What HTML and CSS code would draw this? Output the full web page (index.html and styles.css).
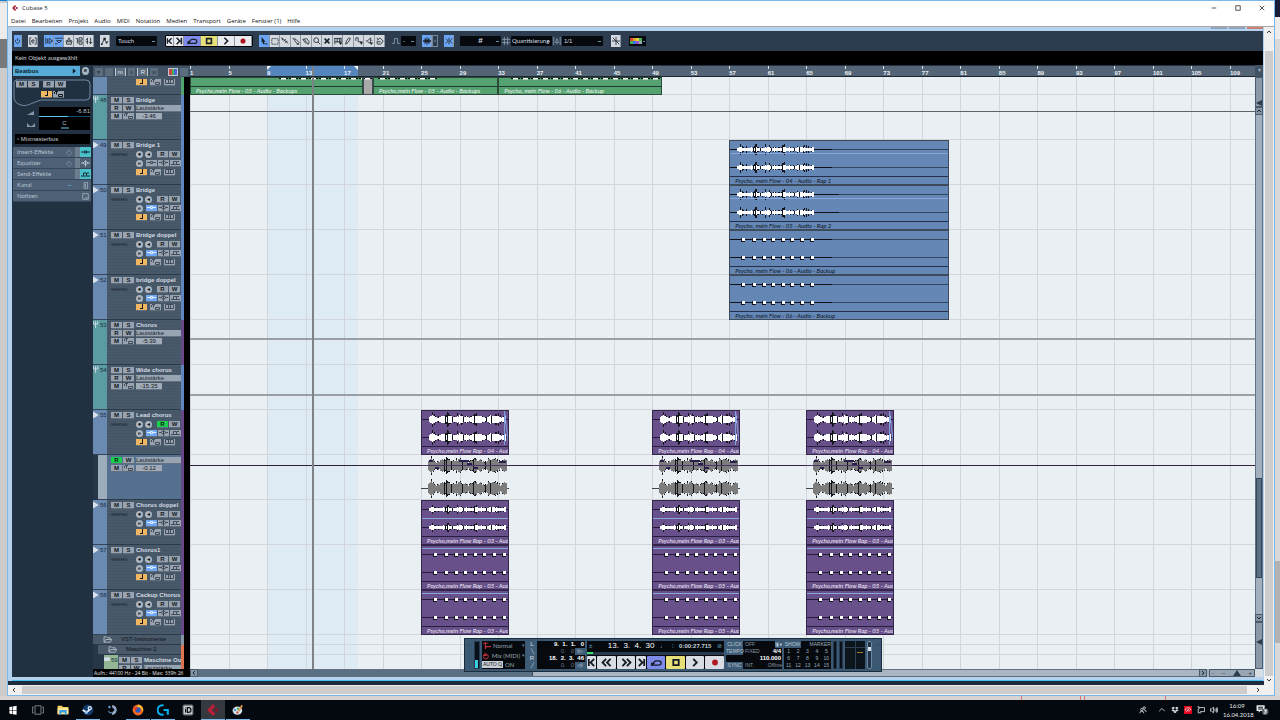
FILE: index.html
```html
<!DOCTYPE html>
<html lang="de">
<head>
  <meta charset="UTF-8" />
  <meta name="viewport" content="width=device-width, initial-scale=1.0"/>
  <title>Cubase 5</title>
  <link rel="stylesheet" href="styles.css">
</head>
<body>

<svg class="sprite" aria-hidden="true">
  <symbol id="i-power" viewBox="0 0 10 10"><path d="M3 3a3 3 0 1 0 4 0M5 1v4"/></symbol>
  <symbol id="i-brackets" viewBox="0 0 10 10"><path d="M3 1H1v8h2M7 1h2v8H7M3 5h4M6.500 4a2 2 0 1 0 0 3"/></symbol>
  <symbol id="i-inspect" viewBox="0 0 10 10"><path d="M1 1v8M3 2v6M5 2v6c4 0 4-6 0-6M9 4v2"/></symbol>
  <symbol id="i-info" viewBox="0 0 10 10"><path d="M0 1.500h10M2 4.500h6l-3 3zM0 8.500h3"/></symbol>
  <symbol id="i-overview" viewBox="0 0 10 10"><path d="M5 1L3 5h4zM2 6h6v3H2zM2 4l-1 2M8 4l1 2"/></symbol>
  <symbol id="i-pool" viewBox="0 0 10 10"><path d="M1 2h2v6M3 5h2M5 1h4v3H5zM5 6h4v3H5z"/></symbol>
  <symbol id="i-mixer" viewBox="0 0 10 10"><path d="M3 1v8M7 1v8M1 4l2-2M5 7h4M1 6h3"/></symbol>
  <symbol id="i-auto" viewBox="0 0 10 10"><path d="M1 9l3-6 3 4 2-2"/><path class="solid" d="M3 1h3v3H3zM6 6h2v2H6zM0 8h2v2H0z"/></symbol>
  <symbol id="i-tostart" viewBox="0 0 10 10"><path class="bold" d="M2 1v8M8 1L4 5l4 4"/></symbol>
  <symbol id="i-toend" viewBox="0 0 10 10"><path class="bold" d="M8 1v8M2 1l4 4-4 4"/></symbol>
  <symbol id="i-rew" viewBox="0 0 12 10"><path class="bold" d="M5 1L1 5l4 4M10 1L6 5l4 4"/></symbol>
  <symbol id="i-fwd" viewBox="0 0 12 10"><path class="bold" d="M2 1l4 4-4 4M7 1l4 4-4 4"/></symbol>
  <symbol id="i-loop" viewBox="0 0 14 10"><path d="M1 8h9c4 0 4-5 0-5H7C5 3 4 5 3 7" stroke-width="1.500"/><path class="solid" d="M1 5l5 1-4 3z"/></symbol>
  <symbol id="i-stop" viewBox="0 0 10 10"><path class="bold" d="M2 2h6v6H2z"/></symbol>
  <symbol id="i-play" viewBox="0 0 10 10"><path class="bold" d="M3 1l4 4-4 4"/></symbol>
  <symbol id="i-rec" viewBox="0 0 10 10"><circle cx="5" cy="5" r="3.200" fill="#b01620" stroke="none"/></symbol>
  <symbol id="i-arrow" viewBox="0 0 10 10"><path class="solid" d="M2 0l5 6H5l1 3-2 0-1-3-1 1z"/><path class="solid" d="M6 8h4L8 10z"/></symbol>
  <symbol id="i-range" viewBox="0 0 10 10"><path d="M1 2h8v7H1z" stroke-dasharray="2 1"/></symbol>
  <symbol id="i-split" viewBox="0 0 10 10"><path d="M1 1l8 7M3 5l3-2M5 7l3-2M1 1l1 3"/></symbol>
  <symbol id="i-glue" viewBox="0 0 10 10"><path d="M1 1l2 3 4 5 2-2-4-4-3-1M6 9h3"/></symbol>
  <symbol id="i-erase" viewBox="0 0 10 10"><path d="M1 3l5-1 3 4-1 3-4-2zM3 3l3 4"/></symbol>
  <symbol id="i-zoom" viewBox="0 0 10 10"><circle cx="4" cy="4" r="3"/><path d="M6 6l3 3"/></symbol>
  <symbol id="i-mute" viewBox="0 0 10 10"><path class="bold" d="M2 2l6 6M8 2L2 8"/></symbol>
  <symbol id="i-warp" viewBox="0 0 10 10"><path d="M1 1v8M4 1v6M7 1v6M1 2h8M1 6h8M9 1v8"/><path class="solid" d="M6 7h4L8 10z"/></symbol>
  <symbol id="i-pen" viewBox="0 0 10 10"><path d="M2 9l1-4 3-4 2 1-3 5z"/></symbol>
  <symbol id="i-line" viewBox="0 0 10 10"><path d="M1 1h3v5h4M1 1v4"/><path class="solid" d="M6 6h4L8 10z"/></symbol>
  <symbol id="i-play2" viewBox="0 0 10 10"><path d="M1 5h2l4-4v7L3 6M8 4h1"/><path class="solid" d="M6 7h4L8 10z"/></symbol>
  <symbol id="i-color" viewBox="0 0 10 10"><path d="M2 4l3-3 4 4-3 4H2L1 6h5M1 1l2 3"/></symbol>
  <symbol id="i-curve" viewBox="0 0 10 10"><path d="M0 8h3V2h4v6h3"/></symbol>
  <symbol id="i-scroll" viewBox="0 0 10 10"><path d="M5 0v10"/><path class="solid" d="M0 4h2V1l3 3v2L2 9V6H0zM10 4H8V1L5 4v2l3 3V6h2z"/></symbol>
  <symbol id="i-snap" viewBox="0 0 10 10"><path d="M5 1v8M1 2l3 3-3 3M9 2L6 5l3 3"/></symbol>
  <symbol id="i-hash" viewBox="0 0 10 10"><path d="M3 0v10M7 0v10M0 3h10M0 7h10"/></symbol>
  <symbol id="i-iq" viewBox="0 0 10 10"><path d="M1 0v10M9 0v10M3 7l2-5 2 5zM5 7v2"/></symbol>
  <symbol id="i-cross" viewBox="0 0 10 10"><path d="M5 0v10M0 5h10M1 1l8 8"/></symbol>
  <symbol id="i-note" viewBox="0 0 9 6"><path class="solid" d="M5 0h1v5H3V4h2z"/></symbol>
  <symbol id="i-lane" viewBox="0 0 9 6"><path d="M.5 1v2M1 .5h3M4.500 3.500h4v2h-4zM2.500 1v2.500"/></symbol>
  <symbol id="i-keys" viewBox="0 0 9 6"><path d="M.5 .5h8v4h-8zM3.500 1v3M5.500 1v3"/></symbol>
  <symbol id="i-ins" viewBox="0 0 9 6"><path d="M0 2.500h3M6 2.500h3M3.500 1.500h2v2h-2z"/></symbol>
  <symbol id="i-eq" viewBox="0 0 9 6"><path d="M0 2.500h2l2.500-2 2.500 2-2.500 2-2.500-2M7 2.500h2M4.500 0v6"/></symbol>
  <symbol id="i-send" viewBox="0 0 9 6"><path d="M0 4.500h9M2.500 4V1.500h3V4M6 1.500h2"/></symbol>
  <symbol id="i-up" viewBox="0 0 8 8"><path d="M2 5l2-2 2 2"/></symbol>
  <symbol id="i-down" viewBox="0 0 8 8"><path d="M2 3l2 2 2-2"/></symbol>
  <symbol id="i-left" viewBox="0 0 8 8"><path d="M5 2L3 4l2 2"/></symbol>
  <symbol id="i-right" viewBox="0 0 8 8"><path d="M3 2l2 2-2 2"/></symbol>
  <symbol id="i-folder" viewBox="0 0 10 8"><path d="M1 7V1h3l1 1h3v2M1 7l2-3h7L8 7z"/></symbol>
  <symbol id="i-fork" viewBox="0 0 7 8"><path d="M.5 0v3.500h5V0M3 0v8"/></symbol>
  <symbol id="i-cubase" viewBox="0 0 10 10"><path d="M5 0l2 2-3 3 3 3-2 2-5-5z" fill="#b51f38" stroke="none"/><path d="M8 3l2 2-2 2-2-2z" fill="#7c1a2c" stroke="none"/></symbol>
</svg>

<main class="desktop">
  <div class="behind-left"><i class="dark"></i></div>

  <section class="window">
    <header class="titlebar">
      <svg class="logo"><use href="#i-cubase"/></svg>
      <h1>Cubase 5</h1>
      <button class="win-btn" aria-label="Minimieren"><svg viewBox="0 0 8 8"><path d="M1 4h6"/></svg></button>
      <button class="win-btn" aria-label="Maximieren"><svg viewBox="0 0 8 8"><path d="M1 1h6v6H1z"/></svg></button>
      <button class="win-btn" aria-label="Schließen"><svg viewBox="0 0 8 8"><path d="M1 1l6 6M7 1L1 7"/></svg></button>
    </header>
    <nav class="menu">
      <a href="#">Datei</a><a href="#">Bearbeiten</a><a href="#">Projekt</a><a href="#">Audio</a><a href="#">MIDI</a><a href="#">Notation</a><a href="#">Medien</a><a href="#">Transport</a><a href="#">Geräte</a><a href="#">Fenster (1)</a><a href="#">Hilfe</a>
    </nav>

    <div class="workspace">
      <div class="project">
        <div class="caption"><i></i><i></i><i class="red"></i></div>

        <div class="toolbar">
          <button class="tb on slim" aria-label="Aktiv"><svg><use href="#i-power"/></svg></button>
          <button class="tb" aria-label="Delay"><svg><use href="#i-brackets"/></svg></button>
          <div class="group">
            <button class="tb on" aria-label="Inspector"><svg><use href="#i-inspect"/></svg></button>
            <button class="tb on" aria-label="Infozeile"><svg><use href="#i-info"/></svg></button>
            <button class="tb" aria-label="Übersicht"><svg><use href="#i-overview"/></svg></button>
            <button class="tb" aria-label="Pool"><svg><use href="#i-pool"/></svg></button>
            <button class="tb" aria-label="Mixer"><svg><use href="#i-mixer"/></svg></button>
          </div>
          <button class="tb" aria-label="Automation"><svg><use href="#i-auto"/></svg></button>
          <select class="w40" aria-label="Automationsmodus"><option>Touch</option></select>
          <div class="group transport">
            <button class="tb slim" aria-label="Anfang"><svg><use href="#i-tostart"/></svg></button>
            <button class="tb" aria-label="Ende"><svg><use href="#i-toend"/></svg></button>
            <button class="tb wide loop" aria-label="Cycle"><svg><use href="#i-loop"/></svg></button>
            <button class="tb wide stop" aria-label="Stop"><svg><use href="#i-stop"/></svg></button>
            <button class="tb wide" aria-label="Start"><svg><use href="#i-play"/></svg></button>
            <button class="tb wide" aria-label="Aufnahme"><svg><use href="#i-rec"/></svg></button>
          </div>
          <div class="group tools" id="tools"></div>
          <div class="group">
            <svg class="label-icon"><use href="#i-curve"/></svg>
            <select class="w16" aria-label="Kurve"><option>-</option></select>
          </div>
          <div class="group">
            <button class="tb on" aria-label="Autoscroll"><svg><use href="#i-scroll"/></svg></button>
            <button class="tb nub" aria-label="Anhalten"><svg><use href="#i-left"/></svg></button>
          </div>
          <button class="tb on" aria-label="Raster"><svg><use href="#i-snap"/></svg></button>
          <div class="group snap">
            <select class="w40 hash" aria-label="Rastermodus"><option>#</option></select>
            <svg class="label-icon"><use href="#i-hash"/></svg>
            <select class="w40 tight" aria-label="Rastertyp"><option>Quantisierung</option></select>
            <svg class="label-icon"><use href="#i-iq"/></svg>
            <select class="w40" aria-label="Quantisierung"><option>1/1</option></select>
          </div>
          <button class="tb last" aria-label="Nulldurchgang"><svg><use href="#i-cross"/></svg></button>
          <button class="colors" aria-label="Farben"><i></i><i></i><i></i><i></i><i></i><i></i><i></i><i></i></button>
        </div>

        <p class="infoline">Kein Objekt ausgewählt</p>

        <div class="arrange">
          <aside class="inspector">
            <h2><span>Beatbus</span><svg viewBox="0 0 10 10"><path d="M1 2l4 3-4 3z" fill="#0a1c2c"/></svg><b><span>e</span></b></h2>
            <div class="channel">
              <svg class="outline" viewBox="0 0 78 28" preserveAspectRatio="none"><path d="M3 1h70q4 0 4 4v12q0 4-4 4H28C18 24 14 28 8 26Q1 24 1 18V4q0-3 3-3"/></svg>
              <button class="mini">M</button><button class="mini">S</button><button class="mini gap">R</button><button class="mini">W</button>
              <button class="mini note" aria-label="Musikalisch"><svg><use href="#i-note"/></svg></button><button class="mini" aria-label="Spuren"><svg><use href="#i-lane"/></svg></button>
            </div>
            <div class="level">
              <svg viewBox="0 0 26 24"><path d="M14 8l7-4v4zM14 20v-4l3 3h2l3-3v4z" fill="#8296aa"/></svg>
              <div class="fader"><output>-6.81</output><i></i><span>C</span></div>
            </div>
            <button class="bus">▫ Mixmasterbus</button>
            <button class="sec"><span>Insert-Effekte</span><small>◇</small><i class="lit"><svg><use href="#i-ins"/></svg></i></button>
            <button class="sec"><span>Equalizer</span><small>◇</small><i><svg><use href="#i-eq"/></svg></i></button>
            <button class="sec"><span>Send-Effekte</span><i class="lit"><svg><use href="#i-send"/></svg></i></button>
            <button class="sec"><span>Kanal</span><small class="dash">–</small><i class="plain"><svg viewBox="0 0 10 10"><path d="M3 1h5v8H3zM5 3v4"/></svg></i></button>
            <button class="sec"><span>Notizen</span><i class="plain"><svg viewBox="0 0 10 10"><path d="M1 1h8v8H1zM4 7h4"/></svg></i></button>
          </aside>

          <div class="list-head"><i>▾</i><i></i><i class="lt">m</i><i>s</i><i class="lt">R</i><i>w</i><i class="rgb"></i><i></i></div>
          <div class="ruler" id="ruler"></div>
          <div class="corner">▾</div>

          <div class="tracks" id="tracks"></div>
          <div class="timeline" id="timeline"></div>
          <div class="vscroll">
            <div class="vzoom"><i></i></div>
            <button aria-label="Nach oben"><svg><use href="#i-up"/></svg></button>
            <div class="vtrack"><i></i></div>
            <button aria-label="Nach unten"><svg><use href="#i-down"/></svg></button>
            <div class="vzoom tall"><i></i></div>
          </div>

          <p class="status">Aufn.: 44100 Hz - 24 Bit - Max: 339h 26</p>
          <div class="hscroll">
            <button aria-label="Nach links"><svg><use href="#i-left"/></svg></button>
            <div class="htrack"><i></i></div>
            <button aria-label="Nach rechts"><svg><use href="#i-right"/></svg></button>
            <div class="hzoom"><span>-</span><span>–</span><i></i><span>+</span></div>
          </div>
          <div class="grip"></div>
        </div>

        <section class="panel">
          <div class="cap">○</div>
          <div class="meter"><i></i></div>
          <div class="modes">
            <p><svg viewBox="0 0 8 8"><path d="M1 2h4M3 1v6M3 5h5"/></svg>Normal<em>▾</em></p>
            <p><svg viewBox="0 0 8 8"><path d="M3 1v3M1 4h4"/><circle cx="4" cy="5" r="2.500"/></svg>Mix (MIDI)<em>▾</em></p>
            <p><b>AUTO Q</b>ON</p>
          </div>
          <div class="locators">
            <p><b>L</b><span>9.&nbsp; 1.&nbsp; 1.&nbsp;&nbsp; 0</span></p>
            <p class="dim"><b>╲</b><span>0.&nbsp;&nbsp; 0</span><b>I▷</b></p>
            <p><b>R</b><span>18.&nbsp; 2.&nbsp; 3.&nbsp; 46</span></p>
            <p class="dim"><b>╱</b><span>0.&nbsp;&nbsp; 0</span><b>◁I</b></p>
          </div>
          <div class="time">
            <div class="display"><span>±</span><strong>13.&nbsp; 3.&nbsp; 4.&nbsp; 30</strong><em>♩</em><em>⁝</em><b>0:00:27.715</b><em>⊘</em></div>
            <div class="shuttle"><i></i></div>
            <div class="keys">
              <button class="half" aria-label="Anfang"><svg><use href="#i-tostart"/></svg></button>
              <button aria-label="Rücklauf"><svg><use href="#i-rew"/></svg></button>
              <button aria-label="Vorlauf"><svg><use href="#i-fwd"/></svg></button>
              <button class="half" aria-label="Ende"><svg><use href="#i-toend"/></svg></button>
              <button class="loop" aria-label="Cycle"><svg><use href="#i-loop"/></svg></button>
              <button class="stop" aria-label="Stop"><svg><use href="#i-stop"/></svg></button>
              <button aria-label="Start"><svg><use href="#i-play"/></svg></button>
              <button aria-label="Aufnahme"><svg><use href="#i-rec"/></svg></button>
            </div>
          </div>
          <div class="tempo">
            <p><b>CLICK</b>OFF<b class="end">I▮♦</b></p>
            <p><b>TEMPO</b>FIXED<strong>4/4</strong></p>
            <p><strong>110.000</strong></p>
            <p><b>SYNC</b>INT.<span class="end">Offline</span></p>
          </div>
          <div class="markers">
            <p><b>SHOW</b><span>MARKER</span></p>
            <div id="markers"></div>
          </div>
          <div class="meter thin"></div><div class="meter thin"></div>
          <div class="inout"></div>
          <div class="knob"><i></i></div>
          <div class="cap">○</div>
        </section>
      </div>

      <div class="os-v"><svg><use href="#i-up"/></svg><i></i><svg><use href="#i-down"/></svg></div>
      <div class="os-h"><svg><use href="#i-left"/></svg><i></i><svg><use href="#i-right"/></svg></div>
      <div class="os-corner"></div>
    </div>
  </section>

  <div class="behind-right"><i></i></div>
  <div class="behind-bottom"><i></i><i></i></div>
</main>

<footer class="taskbar">
  <button class="task" aria-label="Start"><svg viewBox="0 0 20 20"><path d="M4 5l5-1v6H4zM10 4l6-1v7h-6zM4 11h5v6l-5-1zM10 11h6v7l-6-1z" fill="#fff"/></svg></button>
  <button class="task" aria-label="Taskansicht"><svg viewBox="0 0 20 20"><path d="M5 3h10v14H5zM3 5H1v10h2M17 5h2v10h-2" fill="none" stroke="#c8ccd2"/></svg></button>
  <button class="task" aria-label="Explorer"><svg viewBox="0 0 20 20"><path d="M1 3h7l2 2h9v12H1z" fill="#f5d262"/><path d="M1 7h18v10H1z" fill="#fce79a"/><path d="M4 10h12v8h-3v-4H7v4H4z" fill="#3a9fe0"/></svg></button>
  <button class="task run" aria-label="Steam"><svg viewBox="0 0 20 20"><circle cx="10" cy="10" r="9" fill="#123a6c"/><path d="M1 10l7 4 5-5" stroke="#e8f0f8" stroke-width="3" fill="none"/><circle cx="13" cy="7" r="3.500" fill="#e8f0f8"/><circle cx="13" cy="7" r="1.500" fill="#123a6c"/><circle cx="7" cy="14" r="2.500" fill="#8cb8e0"/></svg></button>
  <button class="task" aria-label="TeamSpeak"><svg viewBox="0 0 20 20"><path d="M8 2a8 8 0 1 1 0 16l2-5 4-3-4-4z" fill="#c8d4e2"/><path d="M9 5a5 5 0 0 1 0 10" fill="none" stroke="#8fa6c4" stroke-width="3"/><circle cx="4" cy="5" r="2" fill="#58a0d8"/><path d="M2 12q3 4 7 2" stroke="#5b7e9e" stroke-width="2" fill="none"/></svg></button>
  <button class="task run" aria-label="Firefox"><svg viewBox="0 0 20 20"><circle cx="10" cy="10" r="9" fill="#f26a1e"/><path d="M10 1a9 9 0 0 1 8 12q-2-8-9-8z" fill="#ffc82e"/><circle cx="10" cy="10" r="4.500" fill="#3058c0"/><path d="M2 4q5 2 8 4-3 0-4 3z" fill="#e8302c"/></svg></button>
  <button class="task run" aria-label="Logitech"><svg viewBox="0 0 20 20"><path d="M11 2H9a8 8 0 0 0 0 16h2M11 10h7v8" fill="none" stroke="#00b0f0" stroke-width="3.500"/></svg></button>
  <button class="task" aria-label="iD"><svg viewBox="0 0 20 20"><rect x="1" y="1" width="18" height="18" rx="3" fill="#70757a"/><rect x="3" y="3" width="14" height="14" fill="#c2c6ca"/><path d="M6 8v6M6 5v1M9 6h2q4 0 4 4t-4 4H9z" fill="none" stroke="#101418" stroke-width="2"/></svg></button>
  <button class="task run active" aria-label="Cubase"><svg viewBox="0 0 10 10"><use href="#i-cubase"/></svg></button>
  <button class="task run" aria-label="Paint"><svg viewBox="0 0 20 20"><ellipse cx="9" cy="11" rx="8" ry="7" fill="#d5e6ee"/><circle cx="5" cy="10" r="2" fill="#4a90d0"/><circle cx="9" cy="14" r="2" fill="#d05a40"/><circle cx="10" cy="8" r="2" fill="#50a860"/><path d="M11 12l6-10" stroke="#d89a50" stroke-width="3"/></svg></button>
  <div class="tray">
    <svg class="people" viewBox="0 0 20 20"><circle cx="7" cy="9" r="3"/><path d="M2 18q0-5 5-5t5 5M13 10q5 0 5 5"/><circle cx="13" cy="5" r="3"/></svg>
    <svg viewBox="0 0 20 20"><path d="M3 13l7-7 7 7"/></svg>
    <svg viewBox="0 0 20 20"><path class="fill" d="M6 2l4 3-5 3-4-3zM14 2l5 3-4 3-5-3zM5 8l5 3-4 3-5-3zM15 8l4 3-5 3-4-3zM10 12l4 3-4 3-4-3z"/></svg>
    <svg class="avira" viewBox="0 0 20 20"><path d="M0 0h20v20H0z" fill="#e2001a" stroke="none"/><path d="M3 12q0-8 7-8t7 7M5 16l6-8 2 6"/></svg>
    <svg viewBox="0 0 20 20"><path d="M5 4h14v10H8M1 2h4v6H3v9h8"/></svg>
    <svg viewBox="0 0 20 20"><path d="M1 7h3l5-4v14l-5-4H1zM12 7q2 3 0 6M15 5q4 5 0 10M17 3q5 7 0 14"/></svg>
    <time>16:09<br>16.04.2018</time>
    <svg class="center" viewBox="0 0 24 20"><path class="fill" d="M1 1h15v11H8l-3 3v-3H1z"/><path d="M4 5h9M4 8h9" stroke="#10151c"/><circle cx="17" cy="13" r="6" fill="#5c6066" stroke="none"/><path d="M15 10h4l-2 2q3 1 1 3t-3 0"/></svg>
  </div>
</footer>

<script src="script.js"></script>
</body>
</html>
```
FILE: styles.css
```css
* { box-sizing: border-box; }
body {
  margin: 0;
  height: 100vh;
  display: flex;
  flex-direction: column;
  overflow: hidden;
  font-family: "Liberation Sans", Arial, sans-serif;
  font-size: 6px;
  line-height: 8px;
  background: #cbcbcb;
}
h1, h2, p { margin: 0; font-size: 6px; font-weight: normal; }
button, select, a { font: inherit; color: inherit; text-decoration: none; }
button { border: 0; padding: 0; margin: 0; line-height: 1; display: flex; align-items: center; justify-content: center; }
i, em { font-style: normal; }
svg { display: block; fill: none; stroke: currentColor; stroke-width: 1; }
svg .solid { fill: currentColor; stroke: none; }
svg .bold { stroke-width: 2; }
.sprite { position: absolute; width: 0; height: 0; }

/* desktop */
.desktop { flex: 1; min-height: 0; display: grid; grid-template-columns: 7px 1fr 5px; grid-template-rows: 1fr 4px; }
.behind-left { background: #cbcbcb; padding-top: 2px; border-top: 1px solid #1979ca; }
.behind-left::before { content: ""; display: block; height: 36px; background: #ececec; }
.behind-left .dark { display: block; height: 29px; background: #77797b; }
.behind-right { background: linear-gradient(#171c3a 17px, #ececec 17px, #ececec 39px, #d9d9d9 39px); padding-top: 561px; }
.behind-right i { display: block; height: 82px; background: #b2b2b2; }
.behind-bottom { grid-column: 1 / -1; background: #d6d3d2; display: flex; justify-content: flex-end; gap: 3px; padding-right: 114px; }
.behind-bottom i { width: 82px; border: solid #d87070; border-width: 0 1px; }
.behind-bottom i:first-child { width: 60px; }

/* main window */
.window { background: #fff; border: 1px solid #7ab8ea; display: flex; flex-direction: column; min-width: 0; min-height: 0; }
.titlebar { height: 14px; display: flex; align-items: center; color: #222; font-family: "Open Sans", sans-serif; padding-left: 4px; }
.titlebar .logo { width: 6px; height: 6px; margin-right: 4px; }
.titlebar h1 { flex: 1; }
.win-btn { width: 24px; height: 14px; background: none; }
.win-btn svg { width: 6px; height: 6px; }
.menu { height: 12px; display: flex; gap: 6px; padding: 2px 3px; color: #111; font-family: "Open Sans", sans-serif; border-bottom: 1px solid #a8a8a8; }
.workspace { flex: 1; min-height: 0; display: grid; grid-template-columns: 1fr 10px; grid-template-rows: 1fr 10px; }

.project {
  position: relative;
  display: flex;
  flex-direction: column;
  min-width: 0;
  min-height: 0;
  padding: 0 1px 0 4px;
  background: #b4d2ee;
  border-bottom: 4px solid #1e2b3c;
}
.caption { height: 4px; display: flex; justify-content: flex-end; gap: 2px; padding-bottom: 2px; }
.caption i { width: 16px; background: #8fa3bb; }
.caption .red { background: #d08070; }

/* toolbar */
.toolbar { height: 20px; background: #2d3c4e; display: flex; align-items: center; gap: 6px; padding-left: 2px; color: #aebccb; }
.group { display: flex; align-items: center; }
.tb { width: 10px; height: 12px; background: #d3d9df; color: #1a222c; border-right: 1px solid #8b97a5; flex: none; }
.tb svg { width: 8px; height: 8px; }
.tb.on { background: #6aa5f4; }
.tb.slim { width: 8px; }
.tb.last { margin: 0 2px; }
.tb.nub { width: 6px; background: #2d3c4e; color: #d3d9df; border: 1px solid #75879a; }
.tb.wide { width: 17px; }
.tb.wide svg { width: 12px; height: 8px; }
.transport { border: 1px solid #000; border-radius: 2px; overflow: hidden; margin-left: 2px; }
.transport .tb { height: 10px; background: #e9ebef; }
.loop.loop { background: #7f8bea; }
.stop.stop { background: #e7df78; }
.tools .tb { width: 11px; }
.tools .tb:nth-child(2n) { width: 10px; }
.label-icon { width: 8px; height: 8px; margin: 0 1px; color: #93a3b5; flex: none; }
select {
  appearance: none;
  height: 10px;
  border: 0;
  border-radius: 1px;
  padding: 0 2px;
  color: #d5dde5;
  background: #05080c linear-gradient(#6d93ab, #6d93ab) right 2px center / 3px 1px no-repeat;
}
.w40 { width: 41px; }
.w16 { width: 15px; }
.hash { text-align: center; font-size: 8px; font-weight: bold; }
.tight { padding: 0 1px; font-family: Lato, sans-serif; }
.colors {
  width: 17px;
  height: 10px;
  background: #05080c linear-gradient(#6d93ab, #6d93ab) right 1px center / 2px 1px no-repeat;
  display: grid;
  grid-template-columns: repeat(4, 3px);
  grid-auto-rows: 3px;
  align-content: center;
  align-items: stretch;
  justify-content: start;
  padding-left: 1px;
}
.colors i { background: #e04030; }
.colors i:nth-child(2) { background: #e8a030; }
.colors i:nth-child(3) { background: #e0d840; }
.colors i:nth-child(4), .colors i:nth-child(5) { background: #48b050; }
.colors i:nth-child(6) { background: #3878e0; }
.colors i:nth-child(7) { background: #a050d0; }
.colors i:nth-child(8) { background: #9aa; }
.infoline { height: 14px; background: #000; color: #c9ced4; padding: 3px 3px; font-family: Lato, sans-serif; }

/* arrange area */
.arrange { flex: 1; min-height: 0; display: grid; grid-template-columns: 81px 97px 1fr 8px; grid-template-rows: 12px 1fr 8px; border-bottom: 3px solid #b4d2ee; box-shadow: 0 1px #42c0f0; margin-bottom: 1px; background: #223040; }
.inspector { grid-row: 1 / -1; background: #223142; color: #b7c5d2; padding: 1px 2px 0 1px; overflow: hidden; }
.inspector h2 { height: 10px; background: #56acd6; color: #0a1c2c; font-weight: bold; display: flex; align-items: center; padding-left: 2px; }
.inspector h2 > span { flex: 1; }
.inspector h2 svg { width: 8px; height: 8px; stroke: none; }
.inspector h2 b { width: 11px; height: 10px; background: #25384b; padding: 1px 2px; }
.inspector h2 b span { display: block; height: 8px; border-radius: 50%; background: #a9b5c1; color: #10161d; text-align: center; line-height: 7px; }
.channel { position: relative; height: 28px; margin-top: 3px; padding: 2px 3px; display: flex; flex-wrap: wrap; align-content: flex-start; gap: 3px 1px; }
.outline { position: absolute; inset: 0; width: 100%; height: 100%; color: #718ba5; }
.channel .gap { margin-left: 3px; }
.channel .note { margin-left: 25px; }
.mini { position: relative; width: 11px; height: 7px; background: #98a3af; color: #10161d; font-weight: bold; font-size: 6px; flex: none; border-bottom: 1px solid #626e7b; }
.mini svg { width: 9px; height: 6px; }
.mini.note { background: #f0b660; }
.mini.soft { color: #414d5a; }
.mini.blue { background: #6ea8f6; color: #e4eefb; }
.mini.green { background: #17d04c; }
.level { display: grid; grid-template-columns: 26px 1fr; padding-right: 1px; }
.level svg { width: 26px; height: 24px; stroke: none; }
.fader { background: #000; height: 23px; display: flex; flex-direction: column; text-align: right; }
.fader i { height: 1px; background: linear-gradient(90deg, #59c9e8 56%, #17506c 56%); margin-top: 1px; }
.fader span { text-align: center; border-bottom: 2px solid #3b6478; width: 8px; align-self: center; margin-top: 2px; }
.bus { width: calc(100% - 3px); height: 10px; margin: 3px 2px; background: #000; color: #c5ced6; justify-content: flex-start; padding-left: 2px; }
.sec { width: 100%; height: 11px; background: #4d6075; border-bottom: 1px solid #35475a; color: #b5c2cf; font-size: 6px; padding-left: 4px; font-family: Lato, sans-serif; }
.sec span { flex: 1; text-align: left; }
.sec small { font-size: 8px; margin-right: 3px; color: #8596a8; }
.sec .dash { color: #58c8ea; }
.sec i { width: 16px; height: 10px; border-left: 5px solid #6c7d8f; display: grid; place-items: center; }
.sec i svg { width: 9px; height: 7px; }
.sec .lit { background: #4cc0c8; color: #0c2b36; }
.sec .plain { border-color: transparent; }

.list-head { background: #405264; display: flex; gap: 2px; padding: 2px; border-top: 1px solid #223142; align-items: center; }
.list-head i { width: 8px; height: 8px; background: #5b6c7d; color: #2b3a49; text-align: center; line-height: 8px; }
.list-head .lt { width: 11px; color: #e3e9ee; border: 1px solid #c0c9d1; border-width: 0 1px; }
.list-head .rgb { width: 10px; margin-left: 8px; background: linear-gradient(90deg, #c84848 33%, #48b058 33% 66%, #4868d8 66%); border: 1px solid #c0c9d1; }
.ruler { position: relative; overflow: hidden; background: #526475; border-top: 1px solid #223142; border-bottom: 1px solid #1a2530; color: #eef2f5; font-weight: bold; }
.ruler span { position: absolute; top: 0; height: 12px; padding-top: 4px; line-height: 7px; z-index: 1; }
.ruler span::before { content: ""; position: absolute; left: 0; top: 0; width: 1px; height: 3px; background: #dbe2e8; }
.ruler .cycle { position: absolute; top: 0; bottom: 0; background: #5585bd; }
.ruler .cycle::before, .ruler .cycle::after { content: ""; position: absolute; top: 0; left: 0; border-top: 4px solid #fff; border-right: 4px solid transparent; }
.ruler .cycle::after { left: auto; right: 0; border-right: 0; border-left: 4px solid transparent; }
.corner { background: #405264; color: #9fb0c0; text-align: center; line-height: 10px; }

/* track list */
.tracks { overflow: hidden; color: #d4dbe2; }
.track { height: 45px; display: grid; grid-template-columns: 14px 1fr 3px 6px; grid-template-rows: 100%; background: #000; }
.track.cut { height: 18px; }
.track .no { background: #6b8ab2; color: #1c2c40; padding-top: 1px; display: flex; gap: 1px; border-bottom: 1px solid #34465a; }
.track .no svg { width: 6px; height: 7px; color: #d8e1ea; fill: #d8e1ea; }
.track.fx .no { background: #5b9ba2; }
.track.fx .no svg { fill: none; }
.track .body { position: relative; background: repeating-linear-gradient(#48596a 0 2px, #445567 2px 3px); border-bottom: 1px solid #2c3b4b; padding: 1px 0 0 4px; display: grid; grid-template-columns: 25px 1fr; grid-auto-rows: 8px; row-gap: 1px; overflow: hidden; align-content: start; }
.track.fx .body, .track.auto .body, .track.inst .body { row-gap: 0; }
.track .color { background: #5f86be; }
.track .row { display: flex; gap: 1px; align-items: center; white-space: nowrap; }
.track .stereo { color: #1b2631; }
.track .name { font-weight: bold; }
.track .row .sp { margin-left: 2px; }
.track .dot { width: 7px; height: 7px; margin: 0 1px 0 0; border-radius: 50%; background: #aeb8c2; color: #10161d; font-size: 6px; flex: none; }
.track .dot ~ .sp { margin-left: 3px; }
.track .dot + .soft { margin-left: 1px; }
.track .param { flex: 1; height: 7px; background: #97a4b1; color: #1d2833; line-height: 7px; border-bottom: 1px solid #66727f; }
.track .value { width: 26px; height: 7px; background: #a0abb7; color: #10161d; text-align: center; line-height: 7px; border-bottom: 1px solid #66727f; }
.track.auto { grid-template-columns: 5px 9px 1fr 3px 6px; }
.track.auto .indent { background: #273748; }
.track.auto .no { background: #9dacba; }
.track.auto .body { background: #55718f; }
.c-green { background: #4fa56d !important; }
.c-purple { background: #67498a !important; }
.c-orange { background: #e07352 !important; }
.c-grey { background: #8494a4 !important; }
.folder { height: 10px; display: grid; grid-template-columns: 1fr 3px 6px; background: #000; color: #0b1218; }
.folder span { background: #49596a; display: flex; gap: 9px; padding-left: 10px; align-items: center; border-bottom: 1px solid #2c3b4b; line-height: 7px; }
.folder.deep span { border-left: 5px solid #273748; }
.folder svg { width: 9px; height: 7px; color: #b6c1cc; }
.track.inst { grid-template-columns: 11px 14px 1fr 3px 6px; height: 24px; }
.track.inst .indent { background: #273748; }
.track.inst .no { background: #93b795; }
.track.inst .body { padding-left: 1px; }

/* timeline */
.timeline { position: relative; overflow: hidden; background: #eaeff3; }
.timeline > .beat { position: absolute; top: 0; bottom: 0; width: 1px; background: #d2d6db; }
.timeline > .cycle { position: absolute; top: 0; bottom: 0; background: #dfebf4; }
.lane { position: relative; height: 45px; border-bottom: 1px solid #d2d6db; }
.lane.cut { height: 18px; }
.lane.low { height: 10px; }
.lane .env { position: absolute; left: 0; right: 0; height: 1px; background: #60646a; }
.lane .env.thick { height: 2px; background: #9b9fa4; }
.lane .env.dark { background: #2c2338; }
.playhead { position: absolute; top: 0; bottom: 0; width: 2px; background: #7e8286; z-index: 3; }
.clip { position: absolute; top: 0; height: 45px; overflow: hidden; border: 1px solid #3c4a5a; white-space: nowrap; }
.clip svg { position: absolute; left: 0; top: 0; height: 44px; width: 500px; }
.clip p { position: absolute; left: 0; right: 0; bottom: 0; height: 8px; padding-left: 5px; line-height: 7px; font-family: Lato, "Liberation Sans", sans-serif; font-style: italic; border-top: 1px solid rgba(10, 10, 30, .7); }
.clip.blue { background: #6587b6; color: #0c1624; }
.clip.purple { background: #68508a; color: #efeaf4; border-color: #33264a; }
.clip.green { background: #54a26f; color: #eef6f0; height: 18px; border-color: #2b4a38; }
.clip.grey { background: #a9a9a9; height: 18px; }
.clip.ghost { background: none; border: 0; }
.clip .vol { position: absolute; left: 0; right: 0; height: 1px; background: #86a6dc; }
.clip .fade { stroke: #7fa0dc; }

/* cubase scrollbars */
.vscroll { display: flex; flex-direction: column; background: #a3b0bd; color: #1b2733; }
.vscroll button, .hscroll button { background: #8594a3; border: 1px solid #4a5a6a; width: 8px; height: 8px; flex: none; }
.vscroll svg, .hscroll svg { width: 8px; height: 8px; flex: none; }
.vtrack { flex: 1; padding-top: 363px; border: solid #627283; border-width: 0 1px; }
.vtrack i { display: block; height: 100px; background: #5b6f82; border: 1px solid #35475a; }
.vzoom { height: 30px; background: #8a99a8; border: 1px solid #4a5a6a; padding: 22px 0 0 0; }
.vzoom.tall { height: 47px; padding-top: 16px; }
.vzoom i { display: block; border: 3px solid transparent; border-right-color: #2b3c4d; border-left: 0; border-right-width: 6px; }
.status { background: #000; color: #e6eaee; white-space: nowrap; line-height: 8px; padding-left: 1px; font-size: 5px; font-family: "Open Sans", sans-serif; }
.hscroll { display: flex; background: #a3b0bd; color: #1b2733; }
.htrack { flex: 1; border: solid #627283; border-width: 1px 0; background: #a9b5c1; }
.htrack i { display: block; width: 33.5%; height: 6px; background: #5b6f82; border-right: 1px solid #35475a; }
.hzoom { width: 46px; margin-left: 2px; background: #98a6b4; border: 1px solid #4a5a6a; display: flex; justify-content: space-between; align-items: center; padding: 0 2px; line-height: 6px; }
.hzoom i { border: 4px solid transparent; border-top: 0; border-bottom: 6px solid #2b3c4d; }
.grip { background: #d7dde3; }

/* floating transport panel */
.panel {
  position: absolute;
  left: 456px;
  bottom: 9px;
  height: 34px;
  display: flex;
  gap: 2px;
  padding: 2px 0;
  background: #3c5973;
  border: 1px solid #1b2c3d;
  color: #c5d0da;
  z-index: 5;
}
.panel p { display: flex; align-items: center; gap: 3px; height: 7px; line-height: 7px; white-space: nowrap; }
.panel .cap { width: 7px; color: #1c3146; text-align: center; }
.panel .meter { width: 6px; background: #0a1017; border: 1px solid #24394e; display: flex; align-items: flex-end; }
.panel .meter i { width: 3px; height: 8px; background: #37d0e0; }
.panel .thin { width: 4px; }
.modes, .locators, .tempo, .markers { background: #060a0f; }
.modes { width: 43px; display: flex; flex-direction: column; justify-content: space-between; }
.panel .modes p { height: 9px; color: #9aa4ae; font-family: Lato, sans-serif; gap: 2px; }
.modes svg { width: 9px; height: 9px; color: #c03038; }
.modes em { margin-left: auto; color: #5d88a4; font-size: 5px; }
.modes b { background: #c8ced4; color: #222; font-weight: normal; font-size: 5px; padding: 0 1px; }
.locators { width: 58px; color: #fff; }
.locators p { font-weight: bold; }
.panel .locators p { gap: 0; }
.locators b { width: 10px; background: #3f5c76; color: #d2dde6; text-align: center; font-weight: normal; font-size: 6px; }
.locators .dim b { font-size: 5px; }
.locators span { flex: 1; text-align: right; padding-right: 1px; }
.locators .dim span { color: #66737f; font-weight: normal; }
.time { width: 137px; display: flex; flex-direction: column; gap: 1px; background: #060a0f; }
.display { height: 10px; display: flex; align-items: center; justify-content: space-between; padding: 0 2px; }
.display strong { font-size: 8px; color: #fff; margin-left: 10px; font-weight: normal; }
.display em, .display span { color: #6fa7bf; }
.shuttle { height: 3px; background: #27394b; }
.shuttle i { display: block; width: 6px; height: 2px; background: #3be070; }
.keys { flex: 1; display: flex; gap: 1px; color: #141a22; }
.keys button { flex: 2 1 0; min-width: 0; background: #d9dde3; border-radius: 1px; height: 13px; }
.keys button.half { flex-grow: 1; }
.keys svg { width: 12px; height: 9px; }
.keys .half svg { width: 9px; }
.tempo { width: 56px; color: #8b98a4; }
.tempo b, .markers b { background: #3f5c76; color: #b4c6d4; font-weight: normal; width: 17px; text-align: center; }
.tempo p, .markers p { font-size: 5px; }
.panel .tempo p { gap: 2px; }
.tempo strong { margin-left: auto; color: #fff; font-size: 6px; padding-right: 1px; }
.tempo .end { margin-left: auto; width: auto; }
.markers { width: 47px; color: #9fb0be; }
.markers p { justify-content: space-between; }
.markers div { display: grid; grid-template-columns: repeat(5, 1fr); text-align: center; line-height: 7px; font-size: 5px; }
.inout { width: 20px; background: linear-gradient(90deg, transparent 10px, #2d4054 10px 11px, transparent 11px), linear-gradient(#0c141c 6px, #2d4054 6px 7px, #0c141c 7px); display: flex; justify-content: flex-end; padding: 11px 2px 0 0; }
.inout::before { content: ""; width: 6px; height: 1px; background: #a07a30; }
.knob { width: 5px; background: #203346; border: 1px solid #6d88a2; border-radius: 2px; padding-top: 5px; }
.knob i { display: block; height: 4px; background: #d8e2ea; }

/* windows scrollbars */
.os-v { background: #f0f0f0; color: #333; display: flex; flex-direction: column; align-items: center; padding: 1px 0; }
.os-v svg, .os-h svg { width: 8px; height: 8px; flex: none; }
.os-v i { flex: 1; width: 8px; background: #cdcdcd; margin-top: 15px; }
.os-h { background: #f0f0f0; color: #333; display: flex; align-items: center; padding: 0 2px; }
.os-h i { flex: 1; height: 8px; background: #cdcdcd; margin: 0 7px 0 4px; }
.os-corner { background: #f0f0f0; }

/* taskbar */
.taskbar { height: 20px; background: #04080f; display: flex; color: #e6e9ec; padding-left: 1px; }
.task { width: 24px; height: 20px; margin-right: 1px; background: none; border-bottom: 1px solid transparent; }
.task svg { width: 12px; height: 12px; stroke: none; }
.task.run { border-bottom-color: #7ab8ea; }
.task.active { background: #34383f; }
.tray { margin-left: auto; display: flex; align-items: center; gap: 5px; padding-right: 11px; }
.tray svg { width: 8px; height: 8px; stroke-width: 2; }
.tray .fill { fill: currentColor; stroke: none; }
.tray .people { margin-right: 6px; }
.tray .center { width: 13px; height: 12px; }
.tray time { width: 28px; text-align: center; line-height: 9px; font-family: Lato, sans-serif; white-space: nowrap; }
```
FILE: script.js
```js
const BARS = 110.6; // bars visible in the timeline
const pos = bar => ((bar - 1) / BARS * 100) + '%';
const use = id => `<svg><use href="#i-${id}"/></svg>`;
const $ = id => document.getElementById(id);

const tools = ['arrow', 'range', 'split', 'glue', 'erase', 'zoom', 'mute', 'warp', 'pen', 'line', 'play2', 'color'];
$('tools').innerHTML = tools.map((t, i) => `<button class="tb ${i ? '' : 'on'}" aria-label="${t}">${use(t)}</button>`).join('');

// ruler
const CYCLE = `left:${pos(9)};width:${9.4 / BARS * 100}%`;
let ruler = `<div class="cycle" style="${CYCLE}"></div>`;
for (let b = 1; b < 110; b += 4) ruler += `<span style="left:${pos(b)}">${b}</span>`;
$('ruler').innerHTML = ruler + `<div class="playhead" style="left:${pos(13.7)}"></div>`;

// track list
const mini = (t, cls = '') => `<button class="mini ${cls}">${t}</button>`;
const note = mini(use('note'), 'note') + mini(use('lane'), 'sp soft') + mini(use('keys'), 'sp soft');
const tri = '<svg viewBox="0 0 6 7"><path d="M0 1l5 3-5 3z"/></svg>';

function audioTrack(no, name, color, ins, read) {
  return `<div class="track"><div class="no">${tri}${no}</div><div class="body">
    <div class="row">${mini('M')}${mini('S')}</div><div class="row name">${name}</div>
    <div class="row stereo">stereo</div><div class="row"><button class="dot">●</button><button class="dot">◂</button>${mini('R', 'sp ' + (read ? 'green' : ''))}${mini('W')}</div>
    <div></div><div class="row"><button class="dot">e</button>${mini(use('ins'), 'soft ' + (ins ? 'blue' : ''))}${mini(use('eq'), 'soft')}${mini(use('send'), 'soft')}</div>
    <div></div><div class="row">${note}</div>
  </div><div class="color ${color}"></div></div>`;
}

function fxTrack(no, name, color, value) {
  return `<div class="track fx"><div class="no">${use('fork')}${no}</div><div class="body">
    <div class="row">${mini('M')}${mini('S')}</div><div class="row name">${name}</div>
    <div class="row">${mini('R')}${mini('W')}</div><div class="row"><span class="param">Lautstärke</span></div>
    <div class="row">${mini('M')}${mini(use('lane'), 'soft')}</div><div class="row"><span class="value">${value}</span></div>
  </div><div class="color ${color}"></div></div>`;
}

$('tracks').innerHTML =
  `<div class="track cut"><div class="no"></div><div class="body"><div></div><div class="row">${note}</div></div><div class="color c-green"></div></div>` +
  fxTrack(48, 'Bridge', '', '-3.46') +
  audioTrack(49, 'Bridge 1', '', false) +
  audioTrack(50, 'Bridge', '', true) +
  audioTrack(51, 'Bridge doppel', '', true) +
  audioTrack(52, 'bridge doppel', '', true) +
  fxTrack(53, 'Chorus', 'c-purple', '-5.39') +
  fxTrack(54, 'Wide chorus', '', '-15.35') +
  audioTrack(55, 'Lead chorus', 'c-purple', true, true) +
  `<div class="track auto"><div class="indent"></div><div class="no"></div><div class="body">
    <div class="row">${mini('R', 'green')}${mini('W')}</div><div class="row"><span class="param">Lautstärke</span></div>
    <div class="row">${mini('M')}${mini(use('lane'), 'soft')}</div><div class="row"><span class="value">-0.12</span></div>
  </div><div class="color c-purple"></div></div>` +
  audioTrack(56, 'Chorus doppel', 'c-purple', true) +
  audioTrack(57, 'Chorus1', 'c-purple', true) +
  audioTrack(58, 'Cackup Chorus', 'c-purple', true) +
  `<div class="folder"><span>${use('folder')}VST-Instrumente</span><div class="c-grey"></div></div>` +
  `<div class="folder deep"><span>${use('folder')}Maschine 2</span><div class="c-orange"></div></div>` +
  `<div class="track inst"><div class="indent"></div><div class="no">${use('keys')}59</div><div class="body">
    <div class="row">${mini('M')}${mini('S')}</div><div class="row name">Maschine Ou</div>
    <div class="row">${mini('R')}${mini('W')}</div><div class="row"><span class="param">Lautstärke</span></div>
  </div><div class="color c-orange"></div></div>`;

// waveforms
function random(seed) {
  return () => (seed = (seed * 16807) % 2147483647) / 2147483647;
}

function wave(amp, fill, spikes, rows = [9, 27], end = 84) {
  const rnd = random(77);
  let body = '', dark = '';
  for (let x = 7; x < end; x++) {
    const swell = 0.5 + 0.5 * Math.abs(Math.sin(x / 5));
    const h = Math.max(1, Math.round(amp * swell * (0.6 + rnd() * 0.4)));
    const s = h + (rnd() > 0.5 ? Math.round(rnd() * spikes) : 0);
    const gap = rnd() < 0.12;
    for (const y of rows) {
      dark += `M${x + 0.5} ${y - s}V${y + s + 1}`;
      if (!gap) body += `M${x + 0.5} ${y - h}V${y + h + 1}`;
    }
  }
  return `<path d="${dark}" stroke="#14141c"/><path d="${body}" stroke="${fill}"/>`;
}

function blobs() {
  let out = '';
  for (const x of [13, 24, 34, 43, 53, 62, 72, 82]) {
    for (const y of [9, 27]) {
      out += `<path d="M${x - 2} ${y - 1}h4v4h-4z" fill="#141420" stroke="none"/><path d="M${x - 1} ${y - 1}h3v3h-3z" fill="#fff" stroke="none"/>`;
    }
  }
  return out;
}

const base = (w, c = '#101018', rows = [9, 27]) => `<path d="${rows.map(y => `M0 ${y}.5h${w}`).join('')}" stroke="${c}"/>`;

function clip(start, len, color, label, art, extra = '') {
  return `<div class="clip ${color}" style="left:${pos(start)};width:${len / BARS * 100}%"><svg>${art}</svg>${extra}${label ? `<p>${label}</p>` : ''}</div>`;
}

const bridge = (label, art, w, extra) => clip(57, 22.8, 'blue', label, base(300, '#33465f', [8, 26]) + base(w, '#101018', [8, 26]) + `<g transform="translate(0 -1)">${art}</g>`, extra);
const chorus = (label, art, extra) => [25, 49, 65].map(b => clip(b, 9.1, 'purple', label, `<g transform="translate(0 -1)">${base(100, '#251a38') + art}</g>`, extra)).join('');
const vol = y => `<div class="vol" style="top:${y}px"></div>`;

function backup(w) {
  let art = '';
  for (let x = w[0]; x < w[1]; x += 10) art += `<path d="M${x} .5h5" stroke="#fff" stroke-width="2"/><path d="M${x - 2} .5h2M${x + 5} .5h2" stroke="#111"/>`;
  return art;
}

const fade = '<path class="fade" d="M82.5 1v34M82.500 1l4 33"/>';
const nodes = '<path d="M0 10.500h88" stroke="#4a3568"/><path d="M8 6h4M38 6h10M46 9h5M78 7h7M14 13h4M52 13h5" stroke="#2d1d4c" stroke-width="2"/>';
const ghostRows = [10, 33];

const lanes = [
  ['cut', clip(1, 18, 'green', 'Psycho,mein Flow - 05 - Audio - Backups', backup([90, 172])) +
    clip(19, 1, 'grey', '', backup([1, 8])) +
    clip(20, 13, 'green', 'Psycho,mein Flow - 05 - Audio - Backups', backup([6, 60])) +
    clip(33, 17, 'green', 'Psycho, mein Flow - 06 - Audio - Backup', backup([14, 160]))],
  ['', '<div class="env" style="top:16px"></div>'],
  ['', bridge('Psycho, mein Flow - 04 - Audio - Rap 1', wave(2, '#fff', 3), 102, vol(12))],
  ['', bridge('Psycho, mein Flow - 05 - Audio - Rap 2', wave(2, '#fff', 3), 109, vol(12))],
  ['', bridge('Psycho, mein Flow - 06 - Audio - Backup', blobs(), 102)],
  ['', bridge('Psycho, mein Flow - 06 - Audio - Backup', blobs(), 102)],
  ['', '<div class="env thick" style="top:18px"></div>'],
  ['', '<div class="env thick" style="top:29px"></div>'],
  ['', chorus('Psycho,mein Flow Rap - 04 - Aud', wave(4, '#fff', 3) + fade)],
  ['', '<div class="env dark" style="top:10px"></div>' + [25, 49, 65].map(b => clip(b, 9.1, 'ghost', '', base(88, '#444', ghostRows) + wave(7, '#7d7d7d', 2, ghostRows, 86) + nodes)).join('')],
  ['', chorus('Psycho,mein Flow Rap - 03 - Aud', wave(2, '#fff', 2), vol(17))],
  ['', chorus('Psycho,mein Flow Rap - 05 - Aud', blobs(), vol(2))],
  ['', chorus('Psycho,mein Flow Rap - 05 - Aud', blobs(), vol(2))],
  ['low', ''], ['low', ''], ['', '']
];

let timeline = `<div class="cycle" style="${CYCLE}"></div>`;
for (let b = 1; b < 110; b += 4) timeline += `<div class="beat" style="left:${pos(b)}"></div>`;
timeline += lanes.map(([cls, html]) => `<div class="lane ${cls}">${html}</div>`).join('');
$('timeline').innerHTML = timeline + `<div class="playhead" style="left:${pos(13.7)}"></div>`;

$('markers').innerHTML = Array.from({ length: 15 }, (_, i) => `<span>${i + 1}</span>`).join('');
```
